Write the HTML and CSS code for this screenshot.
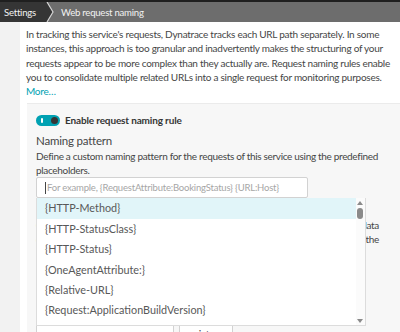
FILE: index.html
```html
<!DOCTYPE html>
<html>
<head>
<meta charset="utf-8">
<link rel="stylesheet" href="styles.css">
</head>
<body>
<header class="crumbs">
  <div class="crumb crumb-root">Settings</div>
  <svg class="crumb-chev" width="10" height="20" viewBox="0 0 10 20"><path d="M0 0 L2 0 L8 10 L2 20 L0 20 Z" fill="#353535"/><path d="M2 0 L8 10 L2 20" fill="none" stroke="#d6d6d6" stroke-width="1.2"/></svg>
  <div class="crumb crumb-current">Web request naming</div>
</header>
<div class="page">
  <aside class="gutter"></aside>
  <main class="content">
    <p class="intro">In tracking this service's requests, Dynatrace tracks each URL path separately. In some instances, this approach is too granular and inadvertently makes the structuring of your requests appear to be more complex than they actually are. Request naming rules enable you to consolidate multiple related URLs into a single request for monitoring purposes.<br><a class="more" href="#">More…</a></p>
    <section class="card">
      <div class="toggle-row">
        <span class="toggle"><span class="toggle-bar"></span><span class="toggle-knob"></span></span>
        <span class="toggle-label">Enable request naming rule</span>
      </div>
      <h3 class="field-title">Naming pattern</h3>
      <p class="field-desc">Define a custom naming pattern for the requests of this service using the predefined placeholders.</p>
      <div class="combo">
        <div class="input"><span class="caret"></span><span class="placeholder">For example, {RequestAttribute:BookingStatus} {URL:Host}</span></div>
        <ul class="dropdown">
          <li class="opt active">{HTTP-Method}</li>
          <li class="opt">{HTTP-StatusClass}</li>
          <li class="opt">{HTTP-Status}</li>
          <li class="opt">{OneAgentAttribute:}</li>
          <li class="opt">{Relative-URL}</li>
          <li class="opt">{Request:ApplicationBuildVersion}</li>
          <li class="opt">{Request:ApplicationName}</li>
          <li class="scroll"><span class="arr-up"></span><span class="thumb"></span><span class="arr-down"></span></li>
        </ul>
      </div>
      <p class="field-desc hidden-desc"><span class="jline">Conditions are checked against the request attributes and any related request data</span><span class="jline">of each request. The rule is applied only if all conditions are met, so keep the</span><span>list of conditions short.</span></p>
      <div class="cond-row">
        <div class="select sel-attr"><span class="x">×</span></div>
        <div class="select sel-op"><span class="sel-text">exists</span><span class="x">×</span></div>
      </div>
    </section>
  </main>
</div>
</body>
</html>
```
FILE: styles.css
```css
* { box-sizing: border-box; }
html, body { margin: 0; padding: 0; }
body {
  width: 400px;
  height: 332px;
  overflow: hidden;
  font-family: "Lato", "Open Sans", sans-serif;
  color: #454646;
  background: #fff;
}
.crumbs {
  display: flex;
  height: 22px;
  background: #6d6d6d;
  border-top: 2px solid #1f1f1f;
}
.crumb {
  display: flex;
  align-items: center;
  color: #f2f2f2;
  font-size: 9.6px;
  letter-spacing: -0.25px;
  white-space: nowrap;
}
.crumb-root {
  background: #353535;
  padding-left: 4px;
  width: 45px;
}
.crumb-chev { display: block; flex: none; }
.crumb-current {
  padding-left: 6px;
  flex: 1;
}
.page {
  display: flex;
  height: 310px;
}
.gutter {
  width: 20px;
  background: #f2f2f2;
  flex: none;
}
.content {
  flex: 1;
  min-width: 0;
}
.intro {
  margin: 0;
  padding: 5px 6px 0 6px;
  font-size: 10px;
  letter-spacing: -0.26px;
  line-height: 14.3px;
}
.more {
  color: #00a1b2;
  text-decoration: none;
}
.card {
  margin: 5px 0 0 7px;
  background: #f7f7f7;
  border-top: 1px solid #ebebeb;
  padding: 9px 14px 0 9px;
  height: 240px;
}
.toggle-row {
  display: flex;
  align-items: center;
  height: 14px;
}
.toggle {
  position: relative;
  width: 24px;
  height: 11px;
  border-radius: 6px;
  background: #00a1b2;
  flex: none;
}
.toggle-bar {
  position: absolute;
  left: 5px;
  top: 3px;
  width: 2px;
  height: 5px;
  background: #fff;
  border-radius: 1px;
}
.toggle-knob {
  position: absolute;
  right: 2px;
  top: 2px;
  width: 7px;
  height: 7px;
  border-radius: 50%;
  background: #353535;
}
.toggle-label {
  margin-left: 5px;
  font-weight: 700;
  font-size: 10px;
  letter-spacing: -0.15px;
  color: #353535;
}
.field-title {
  margin: 5px 0 0 0;
  font-weight: 400;
  font-size: 11.5px;
  letter-spacing: -0.2px;
  line-height: 17px;
  color: #454646;
}
.field-desc {
  margin: 0;
  font-size: 10px;
  letter-spacing: -0.32px;
  line-height: 14px;
}
.combo {
  position: relative;
  width: 272px;
}
.input {
  height: 21px;
  background: #fff;
  border: 1px solid #d2d2d2;
  border-radius: 2px;
  display: flex;
  align-items: center;
  padding-left: 8px;
  font-size: 9.5px;
  letter-spacing: -0.2px;
  white-space: nowrap;
  overflow: hidden;
}
.caret {
  width: 1px;
  height: 12px;
  background: #454646;
  margin-right: 1px;
}
.placeholder { color: #a6a6a6; }
.dropdown {
  position: absolute;
  left: 0;
  top: 21px;
  width: 330px;
  height: 128px;
  margin: 0;
  padding: 0 9px 0 0;
  list-style: none;
  background: #fff;
  border: 1px solid #dcdcdc;
  border-top: none;
  z-index: 5;
  overflow: hidden;
}
.opt {
  height: 20.4px;
  line-height: 20.4px;
  padding-left: 8px;
  font-size: 10.8px;
  color: #585858;
  white-space: nowrap;
}
.opt.active { background: #e1f5f9; }
.scroll {
  position: absolute;
  right: 0;
  top: 0;
  bottom: 0;
  width: 9px;
  background: #fbfbfb;
}
.arr-up, .arr-down {
  position: absolute;
  left: 1px;
  width: 0;
  height: 0;
  border-left: 3px solid transparent;
  border-right: 3px solid transparent;
}
.arr-up { top: 3px; border-bottom: 4px solid #8a8a8a; }
.arr-down { top: 121px; border-top: 4px solid #8a8a8a; }
.thumb {
  position: absolute;
  left: 1px;
  top: 10px;
  width: 6px;
  height: 11px;
  border-radius: 3px;
  background: #8a8a8a;
}
.hidden-desc {
  margin: 19.5px 7px 0 0;
}
.jline {
  display: block;
  text-align: justify;
  text-align-last: justify;
}
.cond-row {
  display: flex;
  gap: 5px;
  margin-top: 64px;
}
.select {
  height: 22px;
  background: #fff;
  border: 1px solid #d2d2d2;
  display: flex;
  align-items: center;
  font-size: 10.5px;
  position: relative;
}
.sel-attr { width: 138px; }
.sel-op { width: 54px; padding-left: 8px; }
.x {
  color: #00a1b2;
  font-size: 12px;
  position: absolute;
  right: 8px;
}
```
